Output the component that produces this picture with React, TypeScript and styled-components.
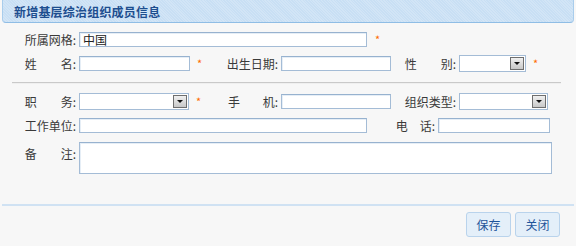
import React from "react";
import styled, { createGlobalStyle } from "styled-components";

const GlobalStyle = createGlobalStyle`
  html, body {
    margin: 0;
    padding: 0;
    background: #f7f7f7;
  }
  body {
    font-family: "Noto Sans CJK SC", "Liberation Sans", sans-serif;
    font-size: 12px;
    color: #333;
  }
`;

const Page = styled.div`
  width: 576px;
  height: 246px;
  padding: 0 2px;
  box-sizing: border-box;
  display: flex;
  flex-direction: column;
`;

const Header = styled.div`
  height: 22px;
  background-color: #c8dff4;
  background-image: repeating-linear-gradient(
    45deg,
    rgba(255, 255, 255, 0.18) 0 1px,
    transparent 1px 2px
  );
  border: 1px solid #a9cdec;
  border-top: none;
  border-bottom-color: #8fbde5;
  border-radius: 0 0 4px 4px;
  display: flex;
  align-items: center;
  padding-left: 11px;
`;

const Title = styled.span`
  font-weight: bold;
  font-size: 12px;
  color: #1d4e8f;
  letter-spacing: 0.2px;
`;

const Form = styled.div`
  padding-top: 4px;
  display: flex;
  flex-direction: column;
`;

const Row = styled.div<{ $top?: boolean }>`
  display: flex;
  align-items: ${(p) => (p.$top ? "flex-start" : "center")};
  height: ${(p) => (p.$top ? "auto" : "24px")};
  margin-top: ${(p) => (p.$top ? "5px" : "0")};
`;

const Divider = styled.div`
  margin: 7px 13px 5px 10px;
  height: 1px;
  background: #c9c9c9;
  border-bottom: 1px solid #efefef;
`;

const LabelCell = styled.div<{ $w: number; $top?: boolean }>`
  width: ${(p) => p.$w}px;
  flex: none;
  display: flex;
  justify-content: flex-end;
  align-items: center;
  padding-right: 3px;
  padding-top: ${(p) => (p.$top ? "3px" : "0")};
  box-sizing: border-box;
  color: #3a3a3a;
  white-space: nowrap;
`;

const Chars = styled.span<{ $spread: number }>`
  display: inline-flex;
  justify-content: space-between;
  width: ${(p) => p.$spread}px;
`;

const Label: React.FC<{ w: number; text: string; spread?: number; top?: boolean }> = ({
  w,
  text,
  spread = 48,
  top,
}) => (
  <LabelCell $w={w} $top={top}>
    <Chars $spread={spread}>
      {text.split("").map((c, i) => (
        <span key={i}>{c}</span>
      ))}
    </Chars>
    :
  </LabelCell>
);

const Input = styled.div<{ $w: number }>`
  width: ${(p) => p.$w}px;
  height: 15px;
  flex: none;
  box-sizing: border-box;
  background: #fff;
  border: 1px solid #a4bcd6;
  border-top-color: #97b2cf;
  box-shadow: inset 1px 1px 0 #e6eef6;
  padding: 0 3px;
  display: flex;
  align-items: center;
  font-size: 12px;
  color: #222;
  line-height: 13px;
`;

const TextArea = styled(Input)`
  height: 32px;
`;

const SelectBox = styled.div<{ $w: number }>`
  width: ${(p) => p.$w}px;
  height: 17px;
  flex: none;
  box-sizing: border-box;
  background: #fff;
  border: 1px solid #a4bcd6;
  display: flex;
  justify-content: flex-end;
  padding: 1px;
`;

const SelectArrow = styled.span`
  width: 14px;
  height: 13px;
  box-sizing: border-box;
  border: 1px solid #6e6e6e;
  background: linear-gradient(#f0f0f0, #c8c8c8);
  display: flex;
  align-items: center;
  justify-content: center;

  &::after {
    content: "";
    border-left: 3px solid transparent;
    border-right: 3px solid transparent;
    border-top: 3px solid #111;
    margin-top: 1px;
  }
`;

const Select: React.FC<{ w: number }> = ({ w }) => (
  <SelectBox $w={w}>
    <SelectArrow />
  </SelectBox>
);

const Star = styled.span<{ $w?: number; $ml?: number }>`
  width: ${(p) => (p.$w ? `${p.$w}px` : "auto")};
  flex: none;
  box-sizing: border-box;
  padding-left: ${(p) => p.$ml ?? 7}px;
  color: #ff6a00;
  font-size: 11px;
  line-height: 1;
`;

const Footer = styled.div`
  margin-top: 30px;
  height: 2px;
  background: #d0e2f3;
`;

const ButtonBar = styled.div`
  display: flex;
  justify-content: flex-end;
  gap: 4px;
  padding: 6px 14px 0 0;
`;

const Button = styled.button`
  width: 45px;
  height: 25px;
  border: 1px solid #b9d3ec;
  border-radius: 3px;
  background: #e4eff9;
  color: #1f5499;
  font-family: "Noto Sans CJK SC", sans-serif;
  font-size: 12px;
  padding: 0;
  cursor: pointer;
`;

export default function App() {
  return (
    <Page>
      <GlobalStyle />
      <Header>
        <Title>新增基层综治组织成员信息</Title>
      </Header>
      <Form>
        <Row>
          <Label w={77} text="所属网格" />
          <Input $w={288}>中国</Input>
          <Star $ml={8}>*</Star>
        </Row>
        <Row>
          <Label w={77} text="姓名" />
          <Input $w={111} />
          <Star $w={38}>*</Star>
          <Label w={53} text="出生日期" />
          <Input $w={110} />
          <Label w={68} text="性别" />
          <Select w={67} />
          <Star>*</Star>
        </Row>
        <Divider />
        <Row>
          <Label w={77} text="职务" />
          <Select w={110} />
          <Star $w={39}>*</Star>
          <Label w={53} text="手机" />
          <Input $w={110} />
          <Label w={68} text="组织类型" />
          <Select w={89} />
        </Row>
        <Row>
          <Label w={77} text="工作单位" />
          <Input $w={288} />
          <Label w={71} text="电话" spread={36} />
          <Input $w={112} />
        </Row>
        <Row $top>
          <Label w={77} text="备注" top />
          <TextArea $w={473} />
        </Row>
      </Form>
      <Footer />
      <ButtonBar>
        <Button>保存</Button>
        <Button>关闭</Button>
      </ButtonBar>
    </Page>
  );
}
